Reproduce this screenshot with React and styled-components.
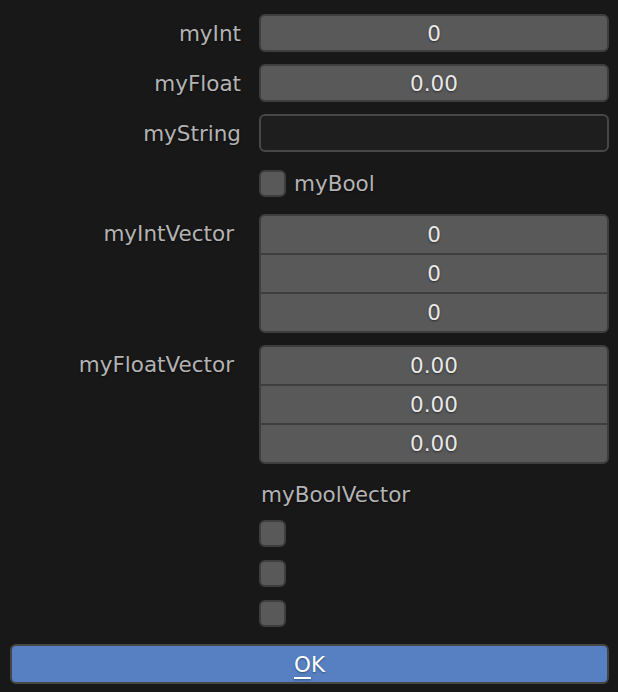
import React from "react";
import styled, { createGlobalStyle } from "styled-components";

const GlobalStyle = createGlobalStyle`
  html, body {
    margin: 0;
    padding: 0;
    background: #181818;
  }
  body {
    font-family: "DejaVu Sans", "Liberation Sans", sans-serif;
  }
`;

const Panel = styled.div`
  width: 618px;
  height: 692px;
  box-sizing: border-box;
  padding: 14px 9px 0 10px;
  display: flex;
  flex-direction: column;
`;

const Form = styled.div`
  display: grid;
  grid-template-columns: 232px 350px;
  column-gap: 18px;
  row-gap: 12px;
  margin-left: -1px;
`;

const Label = styled.div`
  color: #b3b3b3;
  font-size: 21.5px;
  text-align: right;
  height: 38px;
  line-height: 40px;
  padding-right: ${(p) => (p.$inset ? "7px" : "0")};
  text-shadow: 0 1px 2px rgba(0, 0, 0, 0.6);
  white-space: nowrap;
`;

const Field = styled.div`
  height: 38px;
  box-sizing: border-box;
  background: ${(p) => (p.$text ? "#1e1e1e" : "#595959")};
  border: 2px solid ${(p) => (p.$text ? "#474747" : "#3e3e3e")};
  border-radius: 6px;
  color: #e8e8e8;
  font-size: 21.5px;
  display: flex;
  align-items: center;
  justify-content: center;
  text-shadow: 0 1px 2px rgba(0, 0, 0, 0.5);
`;

const Vector = styled.div`
  display: flex;
  flex-direction: column;
  box-sizing: border-box;
  height: 119px;
  border: 2px solid #3e3e3e;
  border-radius: 6px;
  overflow: hidden;
  background: #595959;
`;

const Cell = styled.div`
  flex: 1;
  box-sizing: border-box;
  border-top: ${(p) => (p.$first ? "none" : "2px solid #3e3e3e")};
  color: #e8e8e8;
  font-size: 21.5px;
  display: flex;
  align-items: center;
  justify-content: center;
  text-shadow: 0 1px 2px rgba(0, 0, 0, 0.5);
`;

const CheckRow = styled.div`
  height: ${(p) => (p.$tall ? "40px" : "38px")};
  display: flex;
  align-items: center;
  gap: 8px;
  color: #b3b3b3;
  font-size: 21.5px;
  text-shadow: 0 1px 2px rgba(0, 0, 0, 0.6);
`;

const Box = styled.div`
  width: 27px;
  height: 27px;
  box-sizing: border-box;
  background: #595959;
  border: 2px solid #3e3e3e;
  border-radius: 6px;
`;

const BoolList = styled.div`
  display: flex;
  flex-direction: column;
  margin-top: -1px;
`;

const ListTitle = styled.div`
  height: 38px;
  line-height: 40px;
  padding-left: 2px;
  color: #b3b3b3;
  font-size: 21.5px;
  text-shadow: 0 1px 2px rgba(0, 0, 0, 0.6);
`;

const OkButton = styled.div`
  margin-top: 11px;
  height: 40px;
  width: 599px;
  box-sizing: border-box;
  background: #5680c2;
  border: 2px solid #464646;
  border-radius: 6px;
  color: #ffffff;
  font-size: 21.5px;
  display: flex;
  align-items: center;
  justify-content: center;
  text-shadow: 0 1px 2px rgba(0, 0, 0, 0.4);

  u {
    text-decoration-thickness: 2px;
    text-underline-offset: 5px;
  }
`;

function VectorField({ values }) {
  return (
    <Vector>
      {values.map((v, i) => (
        <Cell key={i} $first={i === 0}>{v}</Cell>
      ))}
    </Vector>
  );
}

export default function App() {
  return (
    <>
      <GlobalStyle />
      <Panel>
        <Form>
          <Label>myInt</Label>
          <Field>0</Field>

          <Label>myFloat</Label>
          <Field>0.00</Field>

          <Label>myString</Label>
          <Field $text />

          <div />
          <CheckRow>
            <Box />
            myBool
          </CheckRow>

          <Label $inset>myIntVector</Label>
          <VectorField values={["0", "0", "0"]} />

          <Label $inset>myFloatVector</Label>
          <VectorField values={["0.00", "0.00", "0.00"]} />

          <div />
          <BoolList>
            <ListTitle>myBoolVector</ListTitle>
            <CheckRow $tall><Box /></CheckRow>
            <CheckRow $tall><Box /></CheckRow>
            <CheckRow $tall><Box /></CheckRow>
          </BoolList>
        </Form>
        <OkButton>
          <span><u>O</u>K</span>
        </OkButton>
      </Panel>
    </>
  );
}
